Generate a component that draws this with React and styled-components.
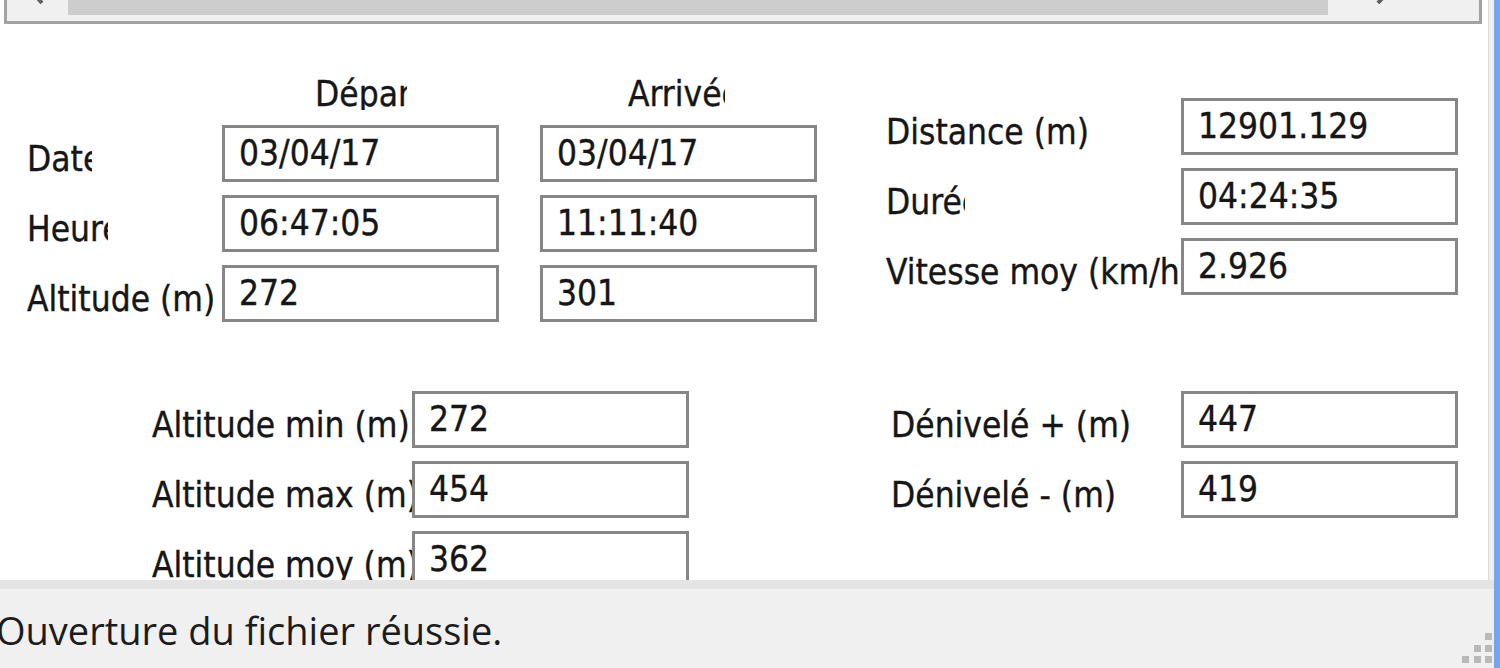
import React from "react";
import styled, { createGlobalStyle } from "styled-components";

const GlobalStyle = createGlobalStyle`
  html, body { margin: 0; padding: 0; background: #f0f0f0; }
  body { font-family: "DejaVu Sans Condensed", "DejaVu Sans", sans-serif; }
  * { box-sizing: border-box; }
`;

const Window = styled.div`
  width: 1500px;
  height: 668px;
  display: flex;
  flex-direction: column;
  background: #f0f0f0;
  border-right: 6px solid #78a5ea;
  overflow: hidden;
`;

const Main = styled.div`
  height: 580px;
  flex: none;
  padding-right: 5px;
`;

const Panel = styled.div`
  height: 100%;
  background: #ffffff;
  border-right: 1px solid #dadada;
  overflow: hidden;
`;

const ScrollFrame = styled.div`
  margin: -33px 0 0 4px;
  width: 1478px;
  height: 57px;
  border: 3px solid #a2a2a2;
  border-top: none;
  background: #f0f0f0;
  display: flex;
`;

const ArrowButton = styled.div`
  width: ${(p) => p.$width || 61}px;
  flex: none;
  display: flex;
  align-items: center;
  justify-content: center;
`;

const Thumb = styled.div`
  width: 1260px;
  flex: none;
  background: #cdcdcd;
  margin-bottom: 6px;
`;

const Track = styled.div`
  flex: 1;
`;

const Body = styled.div`
  padding: 52px 0 0 27px;
  font-size: 35px;
  color: #161616;
  -webkit-text-stroke: 0.35px #161616;
`;

const Section = styled.div`
  display: flex;
  align-items: flex-start;
  margin-top: ${(p) => p.$top || 0}px;
`;

const FieldGrid = styled.div`
  display: grid;
  grid-template-columns: ${(p) => p.$cols};
  grid-template-rows: ${(p) => p.$rows || "none"};
  row-gap: 13px;
  grid-auto-rows: 57px;
  margin-left: ${(p) => p.$left || 0}px;
  margin-top: ${(p) => p.$top || 0}px;
`;

const HeaderCell = styled.div`
  height: 34px;
  line-height: 36px;
  white-space: nowrap;
  overflow: hidden;
  width: ${(p) => p.$width}px;
  margin-left: ${(p) => p.$offset}px;
`;

const Label = styled.div`
  height: 57px;
  padding-top: 6px;
  line-height: 57px;
  white-space: nowrap;
  overflow: hidden;
  max-width: ${(p) => (p.$width ? `${p.$width}px` : "none")};
`;

const Field = styled.div`
  width: 277px;
  height: 57px;
  justify-self: end;
  border: 3px solid #868686;
  background: #ffffff;
  padding-left: 14px;
  line-height: 51px;
  white-space: nowrap;
  overflow: hidden;
`;

const Band = styled.div`
  height: 9px;
  flex: none;
  background: #e4e4e4;
`;

const StatusBar = styled.div`
  flex: 1;
  display: flex;
  background: #f0f0f0;
`;

const StatusText = styled.div`
  flex: 1;
  font-family: "Open Sans", "Noto Sans", sans-serif;
  font-size: 38px;
  color: #1c1c1c;
  padding-top: 15px;
  text-indent: -4px;
  white-space: nowrap;
`;

const Grip = styled.div`
  align-self: flex-end;
  margin: 0 2px 5px 0;
  display: grid;
  grid-template-columns: repeat(3, 7px);
  grid-auto-rows: 7px;
  gap: 4.5px;
`;

const GripDot = styled.div`
  background: ${(p) => (p.$on ? "#b9b9b9" : "transparent")};
`;

const Chevron = ({ dir }) => (
  <svg width="20" height="26" viewBox="0 0 20 26" style={{ marginTop: -2 }}>
    <path
      d={dir === "left" ? "M14 3 L5 13 L14 23" : "M6 3 L15 13 L6 23"}
      fill="none"
      stroke="#606060"
      strokeWidth="4"
    />
  </svg>
);

const FieldRow = ({ label, width, values }) => (
  <>
    <Label $width={width}>{label}</Label>
    {values.map((v, i) => (
      <Field key={i}>{v}</Field>
    ))}
  </>
);

export default function App() {
  return (
    <>
      <GlobalStyle />
      <Window>
        <Main>
          <Panel>
            <ScrollFrame>
              <ArrowButton>
                <Chevron dir="left" />
              </ArrowButton>
              <Thumb />
              <Track />
              <ArrowButton>
                <Chevron dir="right" />
              </ArrowButton>
              <ArrowButton $width={67} />
            </ScrollFrame>
            <Body>
              <Section>
                <FieldGrid $cols="195px 277px 318px" $rows="36px repeat(3, 57px)">
                  <span />
                  <HeaderCell $width={92} $offset={93}>Départ</HeaderCell>
                  <HeaderCell $width={97} $offset={129}>Arrivée</HeaderCell>
                  <FieldRow label="Date" width={65} values={["03/04/17", "03/04/17"]} />
                  <FieldRow label="Heure" width={81} values={["06:47:05", "11:11:40"]} />
                  <FieldRow label="Altitude (m)" values={["272", "301"]} />
                </FieldGrid>
                <FieldGrid $cols="295px 277px" $left={69} $top={22}>
                  <FieldRow label="Distance (m)" values={["12901.129"]} />
                  <FieldRow label="Durée" width={79} values={["04:24:35"]} />
                  <FieldRow label="Vitesse moy (km/h)" values={["2.926"]} />
                </FieldGrid>
              </Section>
              <Section $top={69}>
                <FieldGrid $cols="260px 277px" $left={125}>
                  <FieldRow label="Altitude min (m)" values={["272"]} />
                  <FieldRow label="Altitude max (m)" values={["454"]} />
                  <FieldRow label="Altitude moy (m)" values={["362"]} />
                </FieldGrid>
                <FieldGrid $cols="290px 277px" $left={202}>
                  <FieldRow label="Dénivelé + (m)" values={["447"]} />
                  <FieldRow label="Dénivelé - (m)" values={["419"]} />
                </FieldGrid>
              </Section>
            </Body>
          </Panel>
        </Main>
        <Band />
        <StatusBar>
          <StatusText>Ouverture du fichier réussie.</StatusText>
          <Grip>
            {[0, 1, 2, 3, 4, 5, 6, 7, 8].map((i) => (
              <GripDot key={i} $on={i % 3 >= 2 - Math.floor(i / 3)} />
            ))}
          </Grip>
        </StatusBar>
      </Window>
    </>
  );
}
